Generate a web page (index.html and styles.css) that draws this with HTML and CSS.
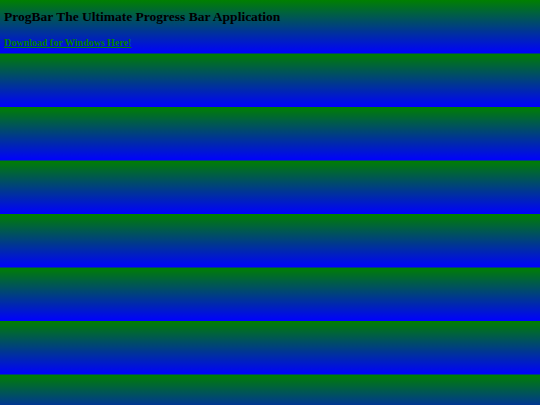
FILE: index.html
```html
<!DOCTYPE html>
<html>
<head>
<meta charset="utf-8">
<title>ProgBar</title>
<link rel="stylesheet" href="styles.css">
</head>
<body>
<h1 class="title">ProgBar The Ultimate Progress Bar Application</h1>
<a class="download" href="#">Download for Windows Here!</a>
</body>
</html>
```
FILE: styles.css
```css
html {
  margin: 0;
  min-height: 100%;
  background: linear-gradient(#008000, #0000ff);
  background-size: 100% 53.5px;
  background-repeat: repeat;
}
body {
  margin: 0;
  padding: 9px 4px 0 4px;
  font-family: "Liberation Serif", "Times New Roman", serif;
}
.title {
  font-size: 13.5px;
  font-weight: bold;
  margin: 0 0 7px 0;
  color: #000;
  line-height: 16px;
}
.download {
  display: inline-block;
  font-size: 10px;
  font-weight: bold;
  color: #008000;
  text-decoration: underline;
  line-height: 12px;
}
```
